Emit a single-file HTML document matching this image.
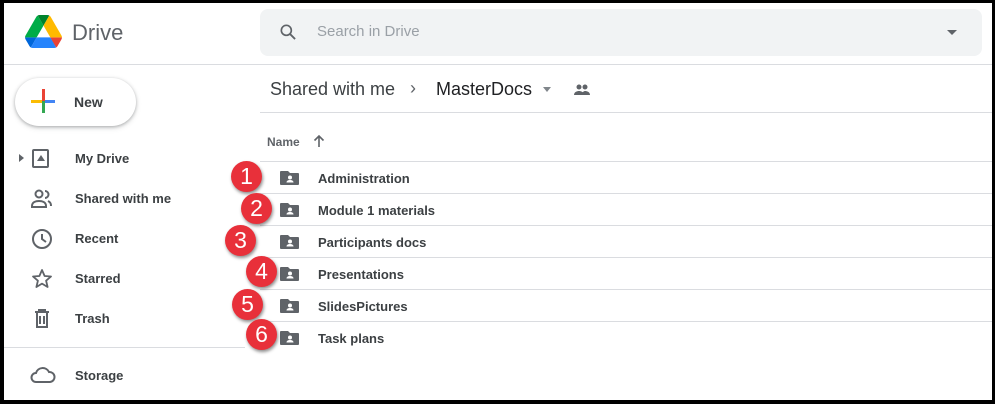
<!DOCTYPE html>
<html><head><style>
*{margin:0;padding:0;box-sizing:border-box}
body{width:995px;height:404px;background:#000;position:relative;overflow:hidden;font-family:"Liberation Sans",Arial,sans-serif;color:#3c4043}
#f{position:absolute;left:4px;top:3px;width:988px;height:397px;background:#fff;overflow:hidden}
.a{position:absolute}
.hl{position:absolute;height:1px;background:#dadce0}
.nav{position:absolute;left:71px;font-size:13px;font-weight:bold;color:#3c4043}
.ic{position:absolute;left:26px}
.row{position:absolute;left:314px;font-size:13px;font-weight:bold;color:#3c4043}
.fold{position:absolute;left:275px}
.b{position:absolute;width:31px;height:31px;border-radius:50%;background:#e8303a;color:#fff;font-size:23px;text-align:center;line-height:31px;box-shadow:1px 2px 3px rgba(0,0,0,.45)}
</style></head><body><div id="f">
<svg class="a" style="left:21px;top:12px" width="37" height="33" viewBox="0 0 87.3 78"><path d="m6.6 66.85 3.85 6.65c.8 1.4 1.950 2.5 3.3 3.3l13.75-23.8h-27.5c0 1.55.4 3.1 1.2 4.5z" fill="#0066da"/><path d="m43.65 25-13.75-23.8c-1.35.8-2.5 1.9-3.3 3.3l-25.4 44a9.06 9.06 0 0 0 -1.2 4.5h27.5z" fill="#00ac47"/><path d="m73.55 76.8c1.35-.8 2.5-1.9 3.3-3.3l1.6-2.75 7.65-13.25c.8-1.4 1.2-2.95 1.2-4.5h-27.502l5.852 11.5z" fill="#ea4335"/><path d="m43.65 25 13.75-23.8c-1.35-.8-2.9-1.2-4.5-1.200h-18.5c-1.6 0-3.15.45-4.5 1.2z" fill="#00832d"/><path d="m59.8 53h-32.3l-13.75 23.8c1.35.8 2.9 1.2 4.5 1.2h50.8c1.6 0 3.15-.45 4.5-1.2z" fill="#2684fc"/><path d="m73.4 26.5-12.7-22c-.8-1.4-1.95-2.5-3.3-3.3l-13.75 23.8 16.15 28h27.45c0-1.55-.4-3.1-1.2-4.5z" fill="#ffba00"/></svg>
<div class="a" style="left:68px;top:17px;font-size:22px;color:#5f6368">Drive</div>
<div class="a" style="left:256px;top:6px;width:722px;height:47px;background:#f1f3f4;border-radius:8px"></div>
<svg class="a" style="left:274px;top:19px" width="20" height="20" viewBox="0 0 24 24"><circle cx="10" cy="10" r="6" fill="none" stroke="#5f6368" stroke-width="2"/><path d="M14.5 14.5l6 6" stroke="#5f6368" stroke-width="2.2"/></svg>
<div class="a" style="left:313px;top:20px;font-size:15px;color:#9aa0a6">Search in Drive</div>
<div class="a" style="left:943px;top:27px;border:5px solid transparent;border-top-color:#5f6368"></div>
<div class="hl" style="left:0;top:61px;width:988px"></div>
<div class="a" style="left:11px;top:75px;width:121px;height:48px;border-radius:24px;background:#fff;box-shadow:0 1px 3px rgba(60,64,67,.35),0 2px 6px rgba(60,64,67,.15)"></div>
<div class="a" style="left:27px;top:97px;width:24px;height:3px;background:linear-gradient(90deg,#fbbc04 50%,#4285f4 50%)"></div>
<div class="a" style="left:38px;top:86px;width:3px;height:24px;background:linear-gradient(#ea4335 50%,#34a853 50%)"></div>
<div class="a" style="left:70px;top:91px;font-size:14px;font-weight:bold;color:#3c4043">New</div>
<div class="a" style="left:15px;top:151px;border:4px solid transparent;border-left:5px solid #5f6368;border-right:0"></div>
<svg class="ic" style="top:145px" width="22" height="22" viewBox="0 0 22 22"><rect x="3" y="2" width="15" height="17" rx="1" fill="none" stroke="#5f6368" stroke-width="2"/><path d="M7 13h8l-4-6z" fill="#5f6368"/></svg>
<div class="nav" style="top:148px">My Drive</div>
<svg class="ic" style="top:185px" width="24" height="22" viewBox="0 0 24 22"><circle cx="9" cy="6" r="3.5" fill="none" stroke="#5f6368" stroke-width="2"/><path d="M2 18c0-4 4-5 7-5s7 1 7 5v1H2z" fill="none" stroke="#5f6368" stroke-width="2"/><path d="M15 3a3.5 3.5 0 0 1 0 7M18 13c2 1 3 2 3 5" fill="none" stroke="#5f6368" stroke-width="2"/></svg>
<div class="nav" style="top:188px">Shared with me</div>
<svg class="ic" style="top:224px" width="24" height="24" viewBox="0 0 24 24"><circle cx="12" cy="12" r="9" fill="none" stroke="#5f6368" stroke-width="2"/><path d="M12 7v5l4 3" fill="none" stroke="#5f6368" stroke-width="2"/></svg>
<div class="nav" style="top:228px">Recent</div>
<svg class="ic" style="top:264px" width="24" height="24" viewBox="0 0 24 24"><path d="M12 3l2.6 6 6.4.5-4.9 4.2 1.5 6.3L12 16.6 6.4 20l1.5-6.3L3 9.5l6.4-.5z" fill="none" stroke="#5f6368" stroke-width="1.8" stroke-linejoin="round"/></svg>
<div class="nav" style="top:268px">Starred</div>
<svg class="ic" style="top:304px" width="24" height="24" viewBox="0 0 24 24"><path d="M5 5h14M9 4V3h6v1M7 6v14h10V6M10 9v8M14 9v8" fill="none" stroke="#5f6368" stroke-width="2"/></svg>
<div class="nav" style="top:308px">Trash</div>
<div class="hl" style="left:0;top:344px;width:241px"></div>
<svg class="ic" style="top:362px" width="26" height="20" viewBox="0 0 26 20"><path d="M6 17a4.5 4.5 0 0 1 0-9 7 7 0 0 1 13-1 5 5 0 0 1 1 10z" fill="none" stroke="#5f6368" stroke-width="2"/></svg>
<div class="nav" style="top:365px">Storage</div>
<div class="a" style="left:266px;top:76px;font-size:18px;color:#3c4043">Shared with me</div>
<div class="a" style="left:406px;top:75px;font-size:18px;color:#5f6368">&#8250;</div>
<div class="a" style="left:432px;top:76px;font-size:18px;color:#202124">MasterDocs</div>
<div class="a" style="left:539px;top:84px;border:4px solid transparent;border-top:5px solid #80868b"></div>
<svg class="a" style="left:569px;top:80px" width="18" height="14" viewBox="0 0 18 14"><circle cx="6" cy="4" r="2.5" fill="#5f6368"/><circle cx="12" cy="4" r="2.5" fill="#5f6368"/><path d="M1 12c0-3 3-4 5-4s5 1 5 4zM9 12c0-3 2-4 3-4 2 0 5 1 5 4z" fill="#5f6368"/></svg>
<div class="hl" style="left:256px;top:109px;width:732px"></div>
<div class="a" style="left:263px;top:132px;font-size:12px;font-weight:bold;color:#5f6368">Name</div>
<svg class="a" style="left:309px;top:131px" width="12" height="14" viewBox="0 0 12 14"><path d="M6 13V2M1.5 6.5L6 2l4.5 4.5" fill="none" stroke="#5f6368" stroke-width="1.6"/></svg>
<div class="hl" style="left:256px;top:158px;width:732px"></div>
<div class="hl" style="left:256px;top:190px;width:732px"></div>
<div class="hl" style="left:256px;top:222px;width:732px"></div>
<div class="hl" style="left:256px;top:254px;width:732px"></div>
<div class="hl" style="left:256px;top:286px;width:732px"></div>
<div class="hl" style="left:256px;top:318px;width:732px"></div>
<svg width="0" height="0" style="position:absolute"><defs><g id="fd"><path d="M2 2h7l2 2h8a1 1 0 0 1 1 1v10a1 1 0 0 1-1 1H2a1 1 0 0 1-1-1V3a1 1 0 0 1 1-1z" fill="#5f6368"/><circle cx="11" cy="8.5" r="2" fill="#fff"/><path d="M7.5 13.5c0-2 2-2.5 3.5-2.5s3.5.5 3.5 2.5z" fill="#fff"/></g></defs></svg>
<svg class="fold" style="top:166px" width="21" height="17"><use href="#fd"/></svg><div class="row" style="top:168px">Administration</div>
<svg class="fold" style="top:198px" width="21" height="17"><use href="#fd"/></svg><div class="row" style="top:200px">Module 1 materials</div>
<svg class="fold" style="top:230px" width="21" height="17"><use href="#fd"/></svg><div class="row" style="top:232px">Participants docs</div>
<svg class="fold" style="top:262px" width="21" height="17"><use href="#fd"/></svg><div class="row" style="top:264px">Presentations</div>
<svg class="fold" style="top:294px" width="21" height="17"><use href="#fd"/></svg><div class="row" style="top:296px">SlidesPictures</div>
<svg class="fold" style="top:326px" width="21" height="17"><use href="#fd"/></svg><div class="row" style="top:328px">Task plans</div>
<div class="b" style="left:227px;top:158px">1</div>
<div class="b" style="left:237px;top:190px">2</div>
<div class="b" style="left:221px;top:222px">3</div>
<div class="b" style="left:242px;top:253px">4</div>
<div class="b" style="left:228px;top:286px">5</div>
<div class="b" style="left:242px;top:316px">6</div>
</div></body></html>
